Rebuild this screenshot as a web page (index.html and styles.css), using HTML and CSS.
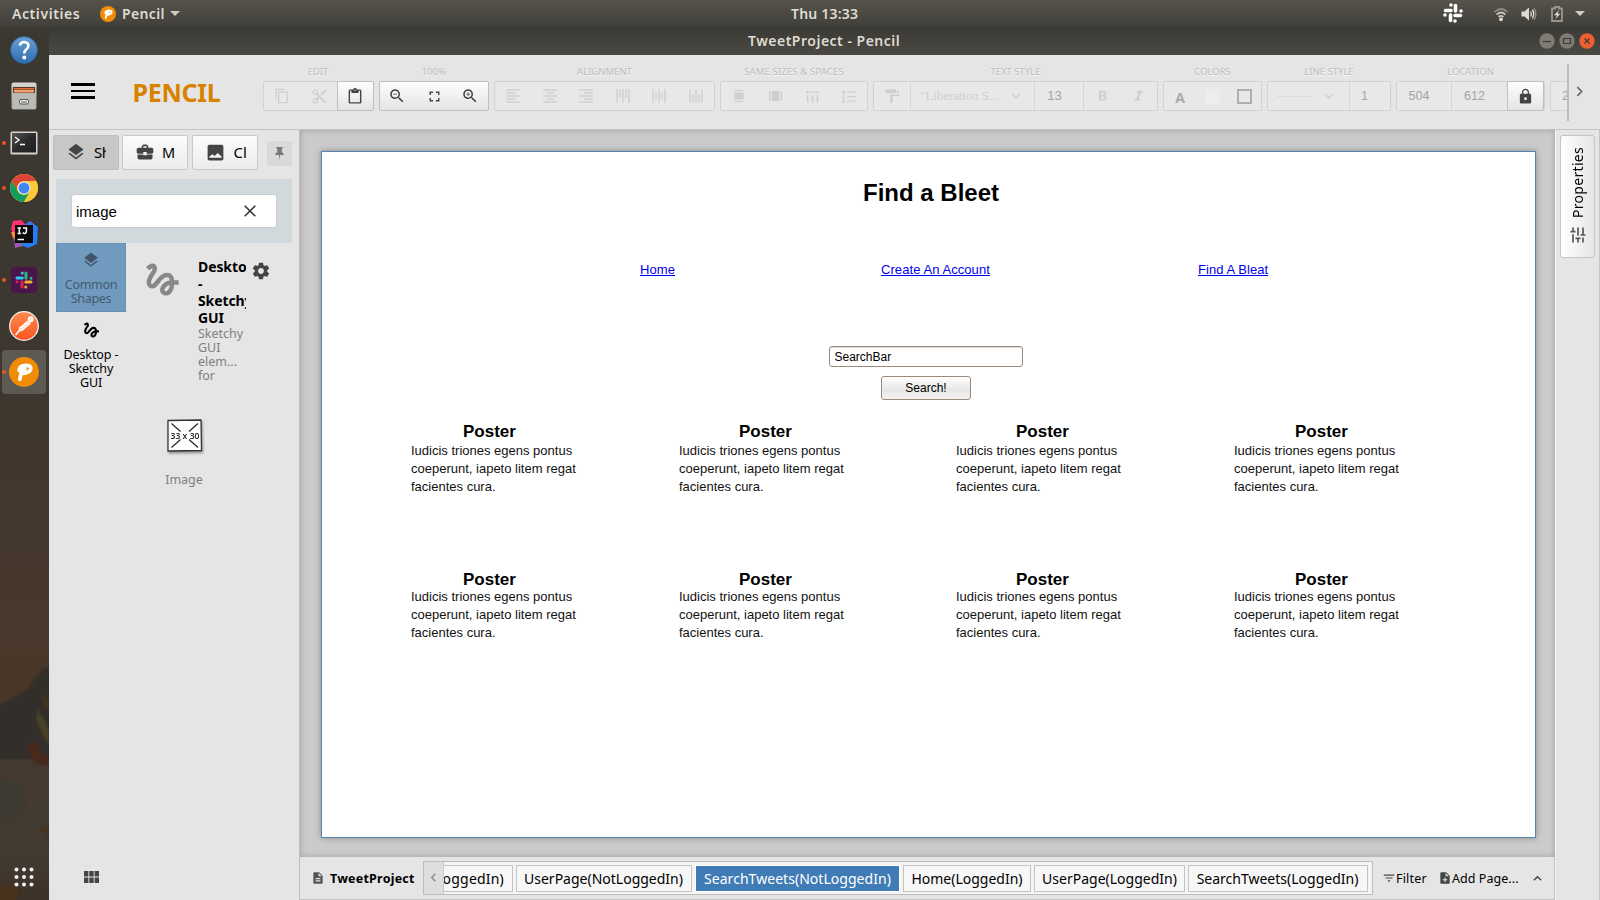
FILE: index.html
```html
<!DOCTYPE html>
<html lang="en">
<head>
<meta charset="utf-8">
<title>TweetProject - Pencil</title>
<link rel="stylesheet" href="styles.css">
</head>
<body>
<svg class="defs" width="0" height="0">
  <defs>
    <symbol id="layers" viewBox="0 0 24 24"><path d="M11.99 18.54l-7.37-5.73L3 14.07l9 7 9-7-1.63-1.27-7.38 5.74zM12 16l7.36-5.73L21 9l-9-7-9 7 1.63 1.27L12 16z"/></symbol>
    <symbol id="gesture" viewBox="0 0 24 24"><path d="M4.59 6.89c.7-.71 1.4-1.35 1.71-1.22.5.2 0 1.03-.3 1.52-.25.42-2.86 3.89-2.86 6.31 0 1.28.48 2.34 1.34 2.98.75.56 1.74.73 2.64.46 1.07-.31 1.95-1.4 3.06-2.77 1.21-1.49 2.83-3.44 4.08-3.44 1.63 0 1.65 1.01 1.76 1.79-3.78.64-5.38 3.67-5.38 5.37 0 1.7 1.44 3.09 3.21 3.09 1.63 0 4.29-1.33 4.69-6.1H21v-2.5h-2.47c-.15-1.65-1.09-4.2-4.03-4.2-2.25 0-4.18 1.91-4.94 2.84-.58.73-2.06 2.48-2.29 2.72-.25.3-.68.84-1.11.84-.45 0-.72-.83-.36-1.92.35-1.09 1.4-2.86 1.85-3.52.78-1.14 1.3-1.92 1.3-3.28C8.95 3.69 7.31 3 6.44 3 5.12 3 3.97 4 3.72 4.25c-.36.36-.66.66-.88.93l1.75 1.71zm9.29 11.66c-.31 0-.74-.26-.74-.72 0-.6.73-2.2 2.87-2.76-.3 2.69-1.43 3.48-2.13 3.48z"/></symbol>
    <symbol id="case" viewBox="0 0 24 24"><path d="M10 16v-1H3.01L3 19c0 1.11.89 2 2 2h14c1.11 0 2-.89 2-2v-4h-7v1h-4zm10-9h-4.01V5l-2-2h-4l-2 2v2H4c-1.1 0-2 .9-2 2v3c0 1.11.89 2 2 2h6v-2h4v2h6c1.1 0 2-.9 2-2V9c0-1.1-.9-2-2-2zm-6 0h-4V5h4v2z"/></symbol>
    <symbol id="photo" viewBox="0 0 24 24"><path d="M21 19V5c0-1.1-.9-2-2-2H5c-1.1 0-2 .9-2 2v14c0 1.1.9 2 2 2h14c1.1 0 2-.9 2-2zM8.500 14l2.500 2L14.500 12.500l4.500 4V18H5v-1.500z"/></symbol>
    <symbol id="gear" viewBox="0 0 24 24"><path d="M19.43 12.98c.04-.32.07-.64.07-.98s-.03-.66-.07-.98l2.11-1.65c.19-.15.24-.42.12-.64l-2-3.46c-.12-.22-.39-.3-.61-.22l-2.49 1c-.52-.4-1.08-.73-1.69-.98l-.38-2.65C14.46 2.18 14.25 2 14 2h-4c-.25 0-.46.18-.49.42l-.38 2.65c-.61.25-1.17.59-1.69.98l-2.49-1c-.23-.09-.49 0-.61.22l-2 3.46c-.13.22-.07.49.12.64l2.11 1.65c-.04.32-.07.65-.07.98s.03.66.07.98l-2.11 1.65c-.19.15-.24.42-.12.64l2 3.46c.12.22.39.3.61.22l2.49-1c.52.4 1.08.73 1.69.98l.38 2.65c.03.24.24.42.49.42h4c.25 0 .46-.18.49-.42l.38-2.65c.61-.25 1.17-.59 1.69-.98l2.49 1c.23.09.49 0 .61-.22l2-3.46c.12-.22.07-.49-.12-.64l-2.11-1.65zM12 15.5c-1.93 0-3.5-1.57-3.5-3.5s1.57-3.5 3.5-3.5 3.5 1.57 3.5 3.5-1.57 3.5-3.5 3.5z"/></symbol>
    <symbol id="tune" viewBox="0 0 24 24"><path d="M3 17v2h6v-2H3zM3 5v2h10V5H3zm10 16v-2h8v-2h-8v-2h-2v6h2zM7 9v2H3v2h4v2h2V9H7zm14 4v-2H11v2h10zm-6-4h2V7h4V5h-4V3h-2v6z"/></symbol>
    <symbol id="copy" viewBox="0 0 24 24"><path d="M16 1H4c-1.1 0-2 .9-2 2v14h2V3h12V1zm3 4H8c-1.1 0-2 .9-2 2v14c0 1.1.9 2 2 2h11c1.1 0 2-.9 2-2V7c0-1.1-.9-2-2-2zm0 16H8V7h11v14z"/></symbol>
    <symbol id="cut" viewBox="0 0 24 24"><path d="M9.64 7.64c.23-.5.36-1.05.36-1.64 0-2.21-1.79-4-4-4S2 3.79 2 6s1.79 4 4 4c.59 0 1.14-.13 1.64-.36L10 12l-2.36 2.36C7.14 14.13 6.59 14 6 14c-2.21 0-4 1.79-4 4s1.79 4 4 4 4-1.79 4-4c0-.59-.13-1.14-.36-1.64L12 14l7 7h3v-1L9.64 7.64zM6 8c-1.1 0-2-.89-2-2s.9-2 2-2 2 .89 2 2-.9 2-2 2zm0 12c-1.1 0-2-.89-2-2s.9-2 2-2 2 .89 2 2-.9 2-2 2zm6-7.5c-.28 0-.5-.22-.5-.5s.22-.5.5-.5.5.22.5.5-.22.5-.5.5zM19 3l-6 6 2 2 7-7V3z"/></symbol>
    <symbol id="paste" viewBox="0 0 24 24"><path d="M19 2h-4.18C14.4.84 13.3 0 12 0c-1.3 0-2.4.84-2.82 2H5c-1.1 0-2 .9-2 2v16c0 1.1.9 2 2 2h14c1.1 0 2-.9 2-2V4c0-1.1-.9-2-2-2zm-7 0c.55 0 1 .45 1 1s-.45 1-1 1-1-.45-1-1 .45-1 1-1zm7 18H5V4h2v3h10V4h2v16z"/></symbol>
    <symbol id="zoom-out" viewBox="0 0 24 24"><path d="M15.5 14h-.79l-.28-.27C15.41 12.59 16 11.11 16 9.5 16 5.91 13.09 3 9.5 3S3 5.91 3 9.5 5.91 16 9.5 16c1.61 0 3.09-.59 4.23-1.57l.27.28v.79l5 4.99L20.49 19l-4.99-5zm-6 0C7.01 14 5 11.99 5 9.5S7.01 5 9.5 5 14 7.01 14 9.5 11.99 14 9.5 14zM7 9h5v1H7z"/></symbol>
    <symbol id="zoom-in" viewBox="0 0 24 24"><path d="M15.5 14h-.79l-.28-.27C15.41 12.59 16 11.11 16 9.5 16 5.91 13.09 3 9.5 3S3 5.91 3 9.5 5.91 16 9.5 16c1.61 0 3.09-.59 4.23-1.57l.27.28v.79l5 4.99L20.49 19l-4.99-5zm-6 0C7.01 14 5 11.99 5 9.5S7.01 5 9.5 5 14 7.01 14 9.5 11.99 14 9.5 14zm2.5-4h-2v2H9v-2H7V9h2V7h1v2h2v1z"/></symbol>
    <symbol id="full" viewBox="0 0 24 24"><path d="M7 14H5v5h5v-2H7v-3zm-2-4h2V7h3V5H5v5zm12 7h-3v2h5v-5h-2v3zM14 5v2h3v3h2V5h-5z"/></symbol>
    <symbol id="al-left" viewBox="0 0 24 24"><path d="M15 15H3v2h12v-2zm0-8H3v2h12V7zM3 13h18v-2H3v2zm0 8h18v-2H3v2zM3 3v2h18V3H3z"/></symbol>
    <symbol id="al-center" viewBox="0 0 24 24"><path d="M7 15v2h10v-2H7zm-4 6h18v-2H3v2zm0-8h18v-2H3v2zm4-6v2h10V7H7zM3 3v2h18V3H3z"/></symbol>
    <symbol id="al-right" viewBox="0 0 24 24"><path d="M3 21h18v-2H3v2zm6-4h12v-2H9v2zm-6-4h18v-2H3v2zm6-4h12V7H9v2zM3 3v2h18V3H3z"/></symbol>
    <symbol id="al-top" viewBox="0 0 24 24"><path d="M3 3h2v18H3zM7 3h2v12H7zM11 3h2v18h-2zM15 3h2v12h-2zM19 3h2v18h-2z"/></symbol>
    <symbol id="al-mid" viewBox="0 0 24 24"><path d="M3 3h2v18H3zM7 7h2v10H7zM11 3h2v18h-2zM15 7h2v10h-2zM19 3h2v18h-2z"/></symbol>
    <symbol id="al-bot" viewBox="0 0 24 24"><path d="M3 3h2v18H3zM7 9h2v12H7zM11 3h2v18h-2zM15 9h2v12h-2zM19 3h2v18h-2z"/></symbol>
    <symbol id="same-w" viewBox="0 0 10 14"><path d="M0 0h10v1.300H0zM0 2.600h10v7.600H0zM0 11.500h10v1.300H0z"/></symbol>
    <symbol id="same-h" viewBox="0 0 13 10"><path d="M0 0h1.500v10H0zM2.700 0h7.600v10H2.700zM11.500 0H13v10h-1.500z"/></symbol>
    <symbol id="sp-h" viewBox="0 0 24 24"><path d="M5 4h14V1.500L23 5l-4 3.500V6H5v2.500L1 5l4-3.500zM3 10h2.500v12H3zM10.700 10h2.500v12h-2.500zM18.500 10H21v12h-2.500z"/></symbol>
    <symbol id="sp-v" viewBox="0 0 24 24"><path d="M5 5h2.500L4 1 .5 5H3v14H.5L4 23l3.500-4H5V5zm5-1.500v2h14v-2H10zm0 17h14v-2H10v2zm0-7.500h14v-2H10v2z"/></symbol>
    <symbol id="paint" viewBox="0 0 24 24"><path d="M18 4V3c0-.55-.45-1-1-1H3c-.55 0-1 .45-1 1v4c0 .55.45 1 1 1h14c.55 0 1-.45 1-1V6h2v4H9v11c0 .55.45 1 1 1h2c.55 0 1-.45 1-1v-9h9V4h-4z"/></symbol>
    <symbol id="bold" viewBox="0 0 24 24"><path d="M15.600 10.790c.97-.67 1.650-1.770 1.650-2.790 0-2.260-1.750-4-4-4H7v14h7.040c2.090 0 3.710-1.700 3.710-3.790 0-1.520-.86-2.820-2.150-3.420zM10 6.500h3c.83 0 1.500.67 1.500 1.500s-.67 1.500-1.500 1.500h-3v-3zm3.500 9H10v-3h3.500c.83 0 1.500.67 1.500 1.500s-.67 1.500-1.500 1.500z"/></symbol>
    <symbol id="italic" viewBox="0 0 24 24"><path d="M10 4v3h2.210l-3.420 8H6v3h8v-3h-2.210l3.420-8H18V4z"/></symbol>
    <symbol id="chev" viewBox="0 0 12 12"><path d="M2 4l4 4 4-4" fill="none" stroke="currentColor" stroke-width="1.500"/></symbol>
    <symbol id="lock" viewBox="0 0 24 24"><path d="M18 8h-1V6c0-2.760-2.240-5-5-5S7 3.240 7 6v2H6c-1.100 0-2 .9-2 2v10c0 1.100.9 2 2 2h12c1.100 0 2-.9 2-2V10c0-1.100-.9-2-2-2zm-6 9c-1.100 0-2-.9-2-2s.9-2 2-2 2 .9 2 2-.9 2-2 2zm3.100-9H8.900V6c0-1.710 1.390-3.100 3.100-3.100 1.710 0 3.100 1.390 3.100 3.100v2z"/></symbol>
    <symbol id="doc" viewBox="0 0 24 24"><path d="M14 2H6c-1.100 0-2 .9-2 2v16c0 1.100.9 2 2 2h12c1.100 0 2-.9 2-2V8l-6-6zm2 16H8v-2h8v2zm0-4H8v-2h8v2zm-3-5V3.500L18.500 9H13z"/></symbol>
    <symbol id="doc-add" viewBox="0 0 24 24"><path d="M14 2H6c-1.100 0-2 .9-2 2v16c0 1.100.9 2 2 2h12c1.100 0 2-.9 2-2V8l-6-6zm2 14h-3v3h-2v-3H8v-2h3v-3h2v3h3v2zm-3-7V3.500L18.500 9H13z"/></symbol>
    <symbol id="filter" viewBox="0 0 24 24"><path d="M10 18h4v-2h-4v2zM3 6v2h18V6H3zm3 7h12v-2H6v2z"/></symbol>
    <symbol id="pin" viewBox="0 0 12 16"><path d="M2.500 1h7v1.500h-1v4c1.400.6 2 1.600 2 3h-3.900L6 15l-.6-5.500H1.500c0-1.400.6-2.400 2-3v-4h-1z"/></symbol>
    <symbol id="slack" viewBox="0 0 20 20"><g stroke-width="3.600" stroke-linecap="round"><path d="M8 2v.01M8 7.500H2.500"/><path d="M18 8v.01M12.500 8V2.500"/><path d="M12 18v.01M12 12.500h5.500"/><path d="M2 12v.01M7.500 12v5.500"/></g></symbol>
    <symbol id="slack2" viewBox="0 0 20 20"><g stroke-width="3.400" stroke-linecap="round"><path stroke="#36c5f0" d="M8.100 2.200v.01M8.100 7.800H2.200"/><path stroke="#2eb67d" d="M17.800 8v.01M12.200 8V2.200"/><path stroke="#ecb22e" d="M12 17.800v.01M12 12.200h5.800"/><path stroke="#e01e5a" d="M2.200 12v.01M7.800 12v5.800"/></g></symbol>
    <symbol id="plogo" viewBox="0 0 30 30"><circle cx="15" cy="15" r="15" fill="#f08c05"/><path d="M10.800 22.300L12.300 15.500Q13 12 16 12M10 13.300Q10.500 8.500 16.800 8.300Q22.300 8.300 21.800 11.800Q20.800 16 13.500 16.300" fill="none" stroke="#fff" stroke-width="3.700" stroke-linecap="round" stroke-linejoin="round"/></symbol>
    <linearGradient id="gBlue" x2="0" y2="1"><stop offset="0" stop-color="#6b9fd4"/><stop offset="1" stop-color="#2d6fae"/></linearGradient>
    <linearGradient id="gGrey" x2="0" y2="1"><stop offset="0" stop-color="#d8d8d6"/><stop offset="1" stop-color="#9b9b98"/></linearGradient>
    <linearGradient id="gTerm" x2="1" y2="1"><stop offset="0" stop-color="#555"/><stop offset=".5" stop-color="#2b2b2b"/><stop offset="1" stop-color="#1d1d1d"/></linearGradient>
    <linearGradient id="gMan" x2="0" y2="1"><stop offset="0" stop-color="#ff8a50"/><stop offset="1" stop-color="#fb5420"/></linearGradient>
    <linearGradient id="gIj" x2="1" y2="1"><stop offset="0" stop-color="#5a6be0"/><stop offset="1" stop-color="#0a84ff"/></linearGradient>
    <filter id="soft"><feGaussianBlur stdDeviation="1"/></filter>
  </defs>
</svg>

<header class="topbar">
  <span class="t-act">Activities</span>
  <svg class="t-logo" width="16" height="16"><use href="#plogo"/></svg>
  <span class="t-app">Pencil</span>
  <i class="tri"></i>
  <span class="t-clock">Thu 13:33</span>
  <div class="tray">
    <svg class="tray-slack" width="20" height="20"><use href="#slack"/></svg>
    <svg class="tray-wifi" width="16" height="16" viewBox="0 0 16 16"><g fill="none" stroke-width="1.700"><path stroke="#8d8b84" d="M1.500 6Q8 0 14.500 6"/><path stroke="#c9c7c0" d="M3.600 8.600Q8 4.400 12.400 8.600M5.600 11Q8 8.800 10.400 11"/></g><circle cx="8" cy="13.300" r="1.900" fill="#dfdbd2"/></svg>
    <svg class="tray-vol" width="16" height="14" viewBox="0 0 16 14"><path fill="#dfdbd2" d="M.5 4.500h3L8 .5v13L3.500 9.500h-3z"/><path d="M9.700 4.500q1.400 2.500 0 5M11.400 2.600q2.600 4.400 0 8.800" fill="none" stroke="#dfdbd2" stroke-width="1.400"/><path d="M13 1q3.600 6 0 12" fill="none" stroke="#8d8b84" stroke-width="1.400"/></svg>
    <svg class="tray-bat" width="12" height="16" viewBox="0 0 12 16"><path d="M1 2.500h3V1h4v1.500h3V15H1z" fill="none" stroke="#98968f" stroke-width="1.800"/><path d="M8 4L3 9.300H6L4.400 13 9.300 7.700H6.500z" fill="#dfdbd2"/></svg>
    <i class="tri"></i>
  </div>
</header>

<div class="desk">
  <nav class="dock">
    <svg class="scene" width="49" height="293"><g filter="url(#soft)"><path d="M-5 100L12 92 28 82 36 70 44 62 55 58V152H-5z" fill="#312d2a"/><path d="M37 100l3 8 4 4 5 12v14l-7-12-5-12z" fill="#4a4226"/><path d="M26 140l10-6 4 10 9 6v8H36z" fill="#462a1f"/><path d="M41 82l4 8 4 2v12l-5-4z" fill="#44301f"/><path d="M0 280l14-4 6 8-6 12H0zM38 222l8 4 4 14v-20z" fill="#47301f"/><path d="M2 170l18 4 6 20-12 22-14-6z" fill="#3d3b31"/></g></svg>
    <div class="dk dk-help"><svg width="28" height="28"><circle cx="14" cy="14" r="13.500" fill="url(#gBlue)" stroke="#2a5f96"/><path d="M9.800 9.500Q10.500 6 14.200 6q4.200.2 4.200 3.800 0 2.200-2.200 3.700-1.800 1.200-1.800 4" fill="none" stroke="#fff" stroke-width="2.600"/><circle cx="14.300" cy="21.500" r="2" fill="#fff"/></svg></div>
    <div class="dk dk-files"><svg width="26" height="28"><rect x=".5" y=".5" width="25" height="27" rx="2" fill="url(#gGrey)"/><rect x="2" y="5" width="22" height="8" fill="#5a3420"/><path d="M3 6h20v1.500H3z" fill="#e0723a"/><path d="M3 8h20v2.500H3z" fill="#f0a277"/><rect x="1.500" y="11" width="23" height="16" fill="#b9b9b6"/><rect x="8.500" y="17.500" width="9" height="4.500" rx="1.500" fill="#eee" stroke="#555"/><path d="M10 20h6" stroke="#555"/></svg></div>
    <div class="dk dk-term on"><svg width="28" height="24"><rect x=".5" y=".5" width="27" height="23" rx="1.500" fill="#d4d4d0"/><rect x="2" y="2" width="24" height="19.500" fill="url(#gTerm)"/><path d="M5 6l4 3-4 3M10 13.500h5" fill="none" stroke="#fff" stroke-width="1.300"/></svg></div>
    <div class="dk dk-chrome on"><svg width="28" height="28" viewBox="-14 -14 28 28"><circle r="14" fill="#fcc934"/><path d="M-12.120-7A14 14 0 0 1 12.120-7H0A7 7 0 0 0-6.060 3.500z" fill="#dc4437"/><path d="M-12.120-7A14 14 0 0 0 0 14L6.060 3.500A7 7 0 0 1-6.060 3.500z" fill="#129e5a"/><path d="M0-7H12.120A14 14 0 0 1 0 14L6.060 3.500z" fill="#fdc93a"/><circle r="6.500" fill="#f1f1f1"/><circle r="5.500" fill="#4285f4"/></svg></div>
    <div class="dk dk-ij"><svg width="28" height="28"><path d="M3 1l8-1 6 6-8 14-7-3 1-4-2-4z" fill="#fe3172"/><path d="M1 12l4 0 3 6-4 2z" fill="#f98e2c"/><path d="M4 18l8-4 6 12-5 0-8 2z" fill="#9b5bb0"/><path d="M13 6l7-5 8 6-1 17-9 4-7-3z" fill="url(#gIj)"/><rect x="5" y="5" width="18" height="18" fill="#0a0a0a"/><path d="M7.500 8h3.600M9.300 8v5.500M7.500 13.500h3.600M13 8h3.400v3.800q0 1.700-1.700 1.700-1.200 0-1.900-1M7.500 19.500h6.500" fill="none" stroke="#fff" stroke-width="1.500"/></svg></div>
    <div class="dk dk-slack on"><span><svg width="18" height="18"><use href="#slack2"/></svg></span></div>
    <div class="dk dk-man"><svg width="30" height="30"><circle cx="15" cy="15" r="14.300" fill="url(#gMan)" stroke="#f4f0ec" stroke-width="1.300"/><circle cx="21.700" cy="8.300" r="2.300" fill="#ffe3d6" stroke="#fff" stroke-width="1.300"/><path d="M18.500 10.500l2.500 2-8 7-3 .5.500-3z" fill="#ffd9c8" stroke="#fff" stroke-width="1.200"/><path d="M10 20l-3.500 4M12 17l6-5.500" stroke="#fff" stroke-width="1.500"/></svg></div>
    <div class="dk dk-pencil on"><span><svg width="30" height="30"><use href="#plogo"/></svg></span></div>
    <svg class="dk-apps" width="20" height="20"><circle cx="2.500" cy="2.500" r="2"/><circle cx="10" cy="2.500" r="2"/><circle cx="17.500" cy="2.500" r="2"/><circle cx="2.500" cy="10" r="2"/><circle cx="10" cy="10" r="2"/><circle cx="17.500" cy="10" r="2"/><circle cx="2.500" cy="17.500" r="2"/><circle cx="10" cy="17.500" r="2"/><circle cx="17.500" cy="17.500" r="2"/></svg>
  </nav>

  <div class="window">
    <div class="titlebar">
      <span class="w-title">TweetProject - Pencil</span>
      <div class="wbtns">
        <svg width="16" height="16"><circle cx="8" cy="8" r="7.700"/><path d="M4 8.500h8"/></svg>
        <svg width="16" height="16"><circle cx="8" cy="8" r="7.700"/><path d="M4.500 5.500h7v5h-7z"/></svg>
        <svg class="x" width="16" height="16"><circle cx="8" cy="8" r="7.700"/><path d="M5.500 5.500l5 5M10.500 5.500l-5 5"/></svg>
      </div>
    </div>

    <div class="toolbar">
      <div class="burger"><i></i><i></i><i></i></div>
      <div class="brand">PENCIL</div>
      <div class="groups">
        <section class="g g-edit"><h6>EDIT</h6><div class="box off"><b><svg width="16" height="16"><use href="#copy"/></svg></b><b><svg width="17" height="17"><use href="#cut"/></svg></b><b class="live"><svg width="18" height="17"><use href="#paste"/></svg></b></div></section>
        <section class="g g-zoom"><h6>100%</h6><div class="box live"><b><svg width="18" height="18"><use href="#zoom-out"/></svg></b><b><svg width="17" height="17"><use href="#full"/></svg></b><b><svg width="18" height="18"><use href="#zoom-in"/></svg></b></div></section>
        <section class="g g-align"><h6>ALIGNMENT</h6><div class="box off"><b><svg width="18" height="18"><use href="#al-left"/></svg></b><b><svg width="18" height="18"><use href="#al-center"/></svg></b><b><svg width="18" height="18"><use href="#al-right"/></svg></b><b><svg width="18" height="18"><use href="#al-top"/></svg></b><b><svg width="18" height="18"><use href="#al-mid"/></svg></b><b><svg width="18" height="18"><use href="#al-bot"/></svg></b></div></section>
        <section class="g g-same"><h6>SAME SIZES &amp; SPACES</h6><div class="box off"><b><svg width="10" height="13"><use href="#same-w"/></svg></b><b><svg width="13" height="10"><use href="#same-h"/></svg></b><b><svg width="15" height="15"><use href="#sp-h"/></svg></b><b><svg width="15" height="15"><use href="#sp-v"/></svg></b></div></section>
        <section class="g g-text"><h6>TEXT STYLE</h6><div class="box off"><b><svg width="16" height="16"><use href="#paint"/></svg></b><b class="font sep"><span>"Liberation S...</span><svg width="12" height="12"><use href="#chev"/></svg></b><b class="size sep"><span>13</span></b><b class="sep"><svg width="17" height="17"><use href="#bold"/></svg></b><b><svg width="17" height="17"><use href="#italic"/></svg></b></div></section>
        <section class="g g-colors"><h6>COLORS</h6><div class="box off"><b class="clr-a">A</b><b><i class="sw-fill"></i></b><b><i class="sw-line"></i></b></div></section>
        <section class="g g-line"><h6>LINE STYLE</h6><div class="box off"><b class="dash"><i></i><svg width="12" height="12"><use href="#chev"/></svg></b><b class="sep num">1</b></div></section>
        <section class="g g-loc"><h6>LOCATION</h6><div class="box off"><b class="num n1">504</b><b class="num n2 sep">612</b><b class="live"><svg width="17" height="17"><use href="#lock"/></svg></b></div></section>
        <section class="g g-more"><h6>&nbsp;</h6><div class="box off"><b class="num">2</b></div></section>
      </div>
      <div class="more"><svg width="13" height="13"><use href="#chev"/></svg></div>
    </div>

    <div class="body">
      <aside class="side">
        <div class="tabs">
          <div class="tab sel"><svg width="20" height="20"><use href="#layers"/></svg><span>Shapes</span></div>
          <div class="tab"><svg width="20" height="20"><use href="#case"/></svg><span class="cm">M</span></div>
          <div class="tab"><svg width="21" height="21"><use href="#photo"/></svg><span class="cc">Cl</span></div>
          <div class="pin"><svg width="11" height="15"><use href="#pin"/></svg></div>
        </div>
        <div class="search"><div class="field"><span>image</span><svg width="12" height="12" viewBox="0 0 12 12"><path d="M.7.7l10.600 10.600M11.300.7L.7 11.300" stroke="#333" stroke-width="1.600"/></svg></div></div>
        <div class="cols">
          <div class="cats">
            <div class="cat sel"><svg width="18" height="18"><use href="#layers"/></svg><span>Common<br>Shapes</span></div>
            <div class="cat"><svg width="21" height="20"><use href="#gesture"/></svg><span>Desktop -<br>Sketchy<br>GUI</span></div>
          </div>
          <div class="detail">
            <div class="head">
              <svg class="big" width="43" height="43"><use href="#gesture"/></svg>
              <div class="info"><strong>Desktop<br>-<br>Sketchy<br>GUI</strong><span>Sketchy<br>GUI<br>elem...<br>for</span></div>
              <svg class="cog" width="20" height="20"><use href="#gear"/></svg>
            </div>
            <div class="thumb">
              <svg width="40" height="40" viewBox="0 0 40 40"><path d="M2 2.500l33-.5.500 30.500L2 33z" fill="#fff" stroke="#333" stroke-width="1.300"/><path d="M5.500 5.500l9 8M32 5.500l-9 8M5.500 29.500l9-8M32 29.500l-9-8" stroke="#222" stroke-width="1.200"/><text x="4.500" y="20.500" textLength="29" lengthAdjust="spacingAndGlyphs">33 x 30</text></svg>
              <span>Image</span>
            </div>
          </div>
        </div>
        <svg class="mod" width="15" height="12"><path d="M0 0h4.400v5.500H0zM5.300 0h4.400v5.500H5.300zM10.600 0H15v5.500h-4.400zM0 6.500h4.400V12H0zM5.300 6.500h4.400V12H5.300zM10.600 6.500H15V12h-4.400z"/></svg>
      </aside>

      <main class="center">
        <div class="stage">
          <div class="page">
            <h1 class="el">Find a Bleet</h1>
            <a class="el l1">Home</a><a class="el l2">Create An Account</a><a class="el l3">Find A Bleat</a>
            <div class="el sbar">SearchBar</div>
            <div class="el sbtn">Search!</div>
            <article class="el c1 ra"><h3>Poster</h3><p>Iudicis triones egens pontus<br>coeperunt, iapeto litem regat<br>facientes cura.</p></article>
            <article class="el c2 ra"><h3>Poster</h3><p>Iudicis triones egens pontus<br>coeperunt, iapeto litem regat<br>facientes cura.</p></article>
            <article class="el c3 ra"><h3>Poster</h3><p>Iudicis triones egens pontus<br>coeperunt, iapeto litem regat<br>facientes cura.</p></article>
            <article class="el c4 ra"><h3>Poster</h3><p>Iudicis triones egens pontus<br>coeperunt, iapeto litem regat<br>facientes cura.</p></article>
            <article class="el c1 rb"><h3>Poster</h3><p>Iudicis triones egens pontus<br>coeperunt, iapeto litem regat<br>facientes cura.</p></article>
            <article class="el c2 rb"><h3>Poster</h3><p>Iudicis triones egens pontus<br>coeperunt, iapeto litem regat<br>facientes cura.</p></article>
            <article class="el c3 rb"><h3>Poster</h3><p>Iudicis triones egens pontus<br>coeperunt, iapeto litem regat<br>facientes cura.</p></article>
            <article class="el c4 rb"><h3>Poster</h3><p>Iudicis triones egens pontus<br>coeperunt, iapeto litem regat<br>facientes cura.</p></article>
          </div>
        </div>
        <footer class="pages">
          <svg class="pdoc" width="14" height="14"><use href="#doc"/></svg>
          <span class="proj">TweetProject</span>
          <div class="strip">
            <div class="prev"><svg width="11" height="11"><use href="#chev"/></svg></div>
            <div class="list">
              <div class="pt p0"><span>(LoggedIn)</span></div>
              <div class="pt p1"><span>UserPage(NotLoggedIn)</span></div>
              <div class="pt p2"><span>SearchTweets(NotLoggedIn)</span></div>
              <div class="pt p3"><span>Home(LoggedIn)</span></div>
              <div class="pt p4"><span>UserPage(LoggedIn)</span></div>
              <div class="pt p5"><span>SearchTweets(LoggedIn)</span></div>
            </div>
          </div>
          <svg class="pfil" width="14" height="14"><use href="#filter"/></svg><span class="fil">Filter</span>
          <svg class="padd" width="14" height="14"><use href="#doc-add"/></svg><span class="add">Add Page...</span>
          <svg class="up" width="11" height="11"><use href="#chev"/></svg>
        </footer>
      </main>

      <aside class="right"><div class="props"><span>Properties</span><svg width="20" height="20"><use href="#tune"/></svg></div></aside>
    </div>
  </div>
</div>
</body>
</html>
```
FILE: styles.css
```css
* { box-sizing: border-box; }
body { margin: 0; width: 1600px; height: 900px; overflow: hidden; display: flex; flex-direction: column; font-family: "Noto Sans", "Open Sans", sans-serif; background: #3c3b37; color: #000; }
svg { display: block; flex: none; fill: currentColor; }
h1, h3, h6, p { margin: 0; }
.defs { position: absolute; }

/* desktop panel */
.topbar { height: 27px; flex: none; display: flex; align-items: center; position: relative; background: linear-gradient(#56534b, #403f3a); color: #dfdbd2; font-weight: 600; font-size: 14px; line-height: 27px; white-space: nowrap; }
.t-act { margin-left: 12px; width: 88px; letter-spacing: .58px; }
.t-logo { margin-right: 6px; }
.t-app { width: 48px; letter-spacing: .35px; }
.tri { width: 0; height: 0; border: 5px solid transparent; border-top-color: #cfccc4; border-bottom: 0; }
.t-clock { position: absolute; left: 791px; letter-spacing: .2px; }
.tray { margin-left: auto; display: flex; align-items: center; padding-right: 15px; }
.tray-slack { stroke: #fff; margin-right: 30px; position: relative; top: -1px; }
.tray-wifi { margin-right: 12px; }
.tray-vol { margin-right: 14px; }
.tray-bat { margin-right: 12px; }

.desk { flex: 1; display: flex; min-height: 0; }

/* launcher */
.dock { width: 49px; flex: none; position: relative; padding-right: 1px; background: linear-gradient(#3b3832 0, #3c372f 300px, #43372e 480px, #48382c 600px, #4a3627 670px, #443a31 742px, #423a31 830px, #3d3129 873px); }
.scene { position: absolute; left: 0; bottom: 0; }
.dk { height: 46px; display: flex; align-items: center; justify-content: center; position: relative; }
.dk-term { top: 1px; }
.on::before { content: ""; position: absolute; left: 2px; top: 21px; width: 4px; height: 4px; border-radius: 2px; background: #e95420; }
.dk-slack span { width: 26px; height: 26px; border-radius: 4px; background: #4a154b; display: grid; place-items: center; }
.dk-pencil span { width: 44px; height: 44px; border-radius: 4px; background: #5d5a54; display: grid; place-items: center; }
.dk-apps { position: absolute; left: 14px; bottom: 13px; color: #f4f2ee; }

.window { flex: 1; display: flex; flex-direction: column; min-width: 0; background: #e5e5e5; }
.titlebar { height: 28px; flex: none; position: relative; background: linear-gradient(#3a3935, #4b4943); color: #dfdbd2; font-weight: 600; font-size: 14px; line-height: 28px; }
.w-title { margin-left: 699px; letter-spacing: .5px; white-space: nowrap; }
.wbtns { position: absolute; right: 5px; top: 6px; display: flex; gap: 4px; }
.wbtns circle { fill: #7d7b74; }
.wbtns path { fill: none; stroke: #3a3935; stroke-width: 1.200; }
.wbtns .x circle { fill: #ee6034; }

/* toolbar */
.toolbar { height: 75px; flex: none; display: flex; border-bottom: 1px solid #c4c4c4; position: relative; }
.burger { width: 24px; margin: 28px 0 0 22px; display: flex; flex-direction: column; gap: 4px; }
.burger i { height: 2.500px; background: #000; }
.brand { width: 130px; margin-left: 37.500px; font-weight: 700; font-size: 25px; line-height: 34px; padding-top: 20px; color: #d98200; letter-spacing: -.3px; }
.groups { width: 1306px; overflow: hidden; display: flex; gap: 5px; padding-top: 10px; height: 60px; }
.g { flex: none; }
.g h6 { font-weight: 400; font-size: 9.500px; line-height: 14px; height: 16px; text-align: center; color: #bcbcbc; text-shadow: 0 1px 0 #f6f6f6; letter-spacing: 0; white-space: nowrap; }
.g-same h6 { letter-spacing: .15px; }
.g-edit { width: 111px; }
.g-zoom { width: 110.500px; }
.g-align { width: 221px; }
.g-same { width: 148px; }
.g-text { width: 285px; }
.g-colors { width: 99px; }
.g-line { width: 124px; }
.g-loc { width: 149px; }
.g-more { width: 60px; }
.g-more .num { justify-content: flex-start; padding-left: 11px; }
.box { height: 30px; border: 1px solid #d2d2d2; border-radius: 2px; display: flex; font-family: "Liberation Sans", sans-serif; background: #e8e8e8; }
.box b { flex: 1; display: flex; align-items: center; justify-content: center; font-weight: 400; min-width: 0; }
.off { color: #cfcfcf; }
.sep { border-left: 1px solid #d6d6d6; }
.box.live, .box .live { color: #444; background: linear-gradient(#fdfdfd, #e4e4e4); }
.box.live { border-color: #bfbfbf; }
.box.live b:first-child { padding-right: 2px; }
.box.live b:last-child { padding-left: 1px; }
.box .live { flex: none; width: 37px; margin: -1px; border: 1px solid #bfbfbf; border-radius: 0 2px 2px 0; }
.box .font { flex: none; width: 124px; justify-content: space-between; padding: 0 12px 0 9px; font: 13px "Liberation Serif", serif; letter-spacing: -.1px; }
.box .size { flex: none; width: 49px; color: #a4a4a4; font-size: 13px; justify-content: flex-start; padding-left: 12px; }
.box .size, .box .num { padding-bottom: 1px; }
.box .num { color: #a4a4a4; font-size: 12.500px; }
.box .clr-a { font-size: 14px; color: #aaa; padding-top: 2px; font-weight: 700; font-family: "Noto Sans", sans-serif; }
.sw-fill { width: 15px; height: 15px; background: #ededed; }
.sw-line { width: 15px; height: 15px; border: 2px solid #aeaeae; }
.box .dash { flex: none; width: 81px; justify-content: flex-start; padding-left: 9px; gap: 9px; }
.dash i { width: 37px; height: 1px; background: #dcdcdc; }
.box .n1 { flex: none; width: 54px; padding-right: 10px; }
.box .n2 { flex: none; width: 57px; padding-right: 11px; }
.g-line .num { padding-right: 11px; }
.more { position: absolute; left: 1518px; top: 9px; width: 32px; height: 57px; border-left: 2px solid #bbb; display: flex; align-items: center; padding: 0 0 3px 4px; color: #666; }
.more svg { transform: rotate(-90deg); }

.body { flex: 1; display: flex; min-height: 0; }

/* shape library */
.side { width: 251px; flex: none; border-right: 1px solid #bdbdbd; position: relative; }
.tabs { display: flex; padding: 5px 0 0 4px; gap: 3.500px; align-items: flex-start; }
.tab { width: 66px; height: 35px; flex: none; border: 1px solid #c9c9c9; border-radius: 2px; background: linear-gradient(#fcfcfc, #ececec); display: flex; align-items: center; padding: 0 0 1px 12px; font-size: 15px; color: #444; }
.tab span { color: #000; margin-left: 8px; width: 12px; overflow: hidden; white-space: nowrap; letter-spacing: -.5px; }
.tab .cm { width: 14px; font-size: 14.500px; letter-spacing: 0; margin-left: 7px; }
.tab .cc { letter-spacing: 0; width: 15px; }
.tab.sel { background: #c7c7c7; border-color: #bdbdbd; }
.tab.sel + .tab { margin-left: -.500px; }
.pin { width: 25px; height: 25px; margin: 6px 0 0 6px; background: #d9d9d9; border-radius: 2px; display: grid; place-items: center; color: #777; }
.search { margin: 9px 0 0 7px; width: 236px; height: 64px; background: #d1d9dc; padding: 15px 0 0 15px; }
.field { width: 206px; height: 34px; background: #fff; border: 1px solid #c9cdd0; border-radius: 3px; display: flex; align-items: center; padding-left: 4px; font: 15px "Liberation Sans", sans-serif; }
.field span { width: 167.500px; }
.cols { display: flex; padding-left: 7px; }
.cats { width: 70px; flex: none; }
.cat { height: 78px; display: flex; flex-direction: column; align-items: center; padding-top: 8px; font-size: 12.500px; line-height: 14px; text-align: center; letter-spacing: -.1px; }
.cat span { margin-top: 8px; white-space: nowrap; }
.cat.sel { height: 69px; padding-top: 7px; background: #719abf; color: #435a70; border: 1px solid #6890b5; letter-spacing: -.3px; }
.cat.sel svg { color: #41566b; }
.cat.sel span { margin-top: 9px; }
.detail { flex: 1; padding-top: 15px; }
.head { display: flex; height: 160px; }
.big { margin: 0 0 0 15px; color: #888; }
.info { width: 48px; margin-left: 14px; overflow: hidden; white-space: nowrap; }
.info strong { display: block; font-size: 14px; line-height: 17px; letter-spacing: -.1px; }
.info span { display: block; font-size: 12.500px; line-height: 14px; color: #808080; padding-top: 1px; }
.cog { margin: 3px 0 0 5px; color: #444; }
.thumb { width: 117px; display: flex; flex-direction: column; align-items: center; color: #808080; font-size: 12.500px; line-height: 16px; }
.thumb svg { margin: 0 0 0 2px; filter: drop-shadow(1px 2px 1px rgba(0, 0, 0, .35)); }
.thumb text { font: 600 8.500px "Noto Sans", sans-serif; fill: #333; }
.thumb span { margin: 14px 1px 0 0; }
.mod { position: absolute; left: 35px; bottom: 17px; color: #444; }

/* drawing area */
.center { flex: 1; display: flex; flex-direction: column; min-width: 0; }
.stage { height: 727px; background: #cbcbcb; box-shadow: inset 0 0 6px #a0a0a0; padding: 21px 0 0 21px; }
.page { width: 1215px; height: 687px; background: #fff; border: 1px solid #5585b0; box-shadow: 0 0 6px #888; position: relative; font-family: "Liberation Sans", sans-serif; white-space: nowrap; }
.el { position: absolute; }
h1.el { left: 541px; top: 27px; font-size: 24px; line-height: 28px; }
a.el { font-size: 13px; line-height: 16px; top: 110px; color: #0000ee; text-decoration: underline; letter-spacing: .07px; }
.l1 { left: 318px; }
.l2 { left: 559px; }
.l3 { left: 876px; }
.sbar { left: 507px; top: 194px; width: 194px; height: 21px; border: 1px solid #9a8b7c; border-radius: 3px; font-size: 12px; line-height: 20px; padding-left: 4.500px; box-shadow: inset 0 1px 1px #ddd; }
.sbtn { left: 559px; top: 224px; width: 90px; height: 24px; border: 1px solid #9a8b7c; border-radius: 3px; font-size: 12px; line-height: 22px; text-align: center; background: linear-gradient(#fff, #e6e6e6 60%, #f2f2f2); }
article h3 { font-size: 17px; line-height: 20px; margin-left: 52px; }
article p { font-size: 13px; line-height: 18px; color: #111; }
.ra { top: 270px; }
.rb { top: 418px; }
.rb p { margin-top: -2px; }
.c1 { left: 89px; }
.c2 { left: 357px; }
.c3 { left: 634px; }
.c4 { left: 912px; }
.c2 h3, .c3 h3 { margin-left: 60px; }
.c4 h3 { margin-left: 61px; }

/* page list */
.pages { flex: 1; display: flex; align-items: center; border: 1px solid #c4c4c4; border-width: 0 1px 1px 0; font-size: 12.500px; white-space: nowrap; }
.pdoc { margin-left: 11px; color: #555; }
.proj { font-weight: 700; margin-left: 5px; width: 93px; letter-spacing: .22px; }
.strip { width: 950px; height: 34px; flex: none; display: flex; border: 1px solid #bdbdbd; background: #f4f4f4; }
.prev { width: 20px; flex: none; background: #dedede; border-right: 1px solid #ccc; display: grid; place-items: center; padding-bottom: 2px; color: #888; }
.prev svg { transform: rotate(90deg); }
.list { flex: 1; min-width: 0; display: flex; padding: 3px 4px 3px 0; gap: 3px; overflow: hidden; }
.pt { height: 27px; flex: none; border: 1px solid #c4c4c4; background: #f7f7f7; font-size: 14px; line-height: 25px; display: flex; justify-content: center; }
.p0 { width: 69px; border-left: 0; justify-content: flex-end; padding-right: 8px; overflow: hidden; letter-spacing: .2px; }
.p1 { width: 176px; padding-right: 1px; }
.p2 { width: 205px; background: #3f7cb5; color: #fff; border-color: #fff; letter-spacing: .04px; }
.p3 { width: 128px; }
.p4 { width: 151px; }
.p5 { width: 180px; padding-right: 1px; }
.pfil { margin-left: 9px; color: #444; }
.fil { width: 42px; margin-left: 0; letter-spacing: .2px; }
.padd { color: #444; }
.add { width: 78px; margin-left: 0; letter-spacing: .05px; }
.up { transform: rotate(180deg); color: #444; margin-left: 2px; }

.right { width: 45px; flex: none; border-left: 1px solid #f4f4f4; border-right: 1px solid #c4c4c4; padding: 5px 0 0 4px; }
.props { width: 35px; height: 123px; border: 1px solid #c4c4c4; border-radius: 3px; background: linear-gradient(90deg, #fff, #e6e6e6); display: flex; flex-direction: column; align-items: center; padding-top: 10px; }
.props span { writing-mode: vertical-rl; transform: rotate(180deg); font-size: 14px; line-height: 20px; height: 72px; letter-spacing: .3px; }
.props svg { margin-top: 7px; transform: rotate(-90deg); color: #555; }
```
